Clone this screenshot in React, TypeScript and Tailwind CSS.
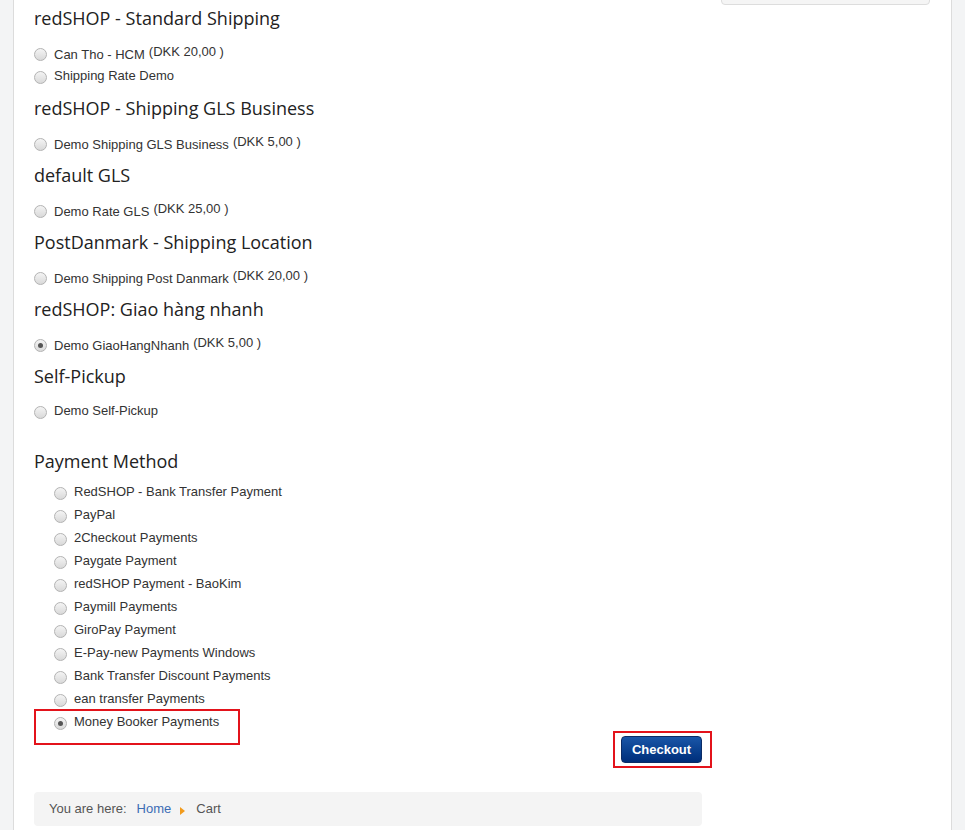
import React from "react";

function Radio({ checked = false }: { checked?: boolean }) {
  return (
    <span className="mt-[3px] flex h-[13px] w-[13px] shrink-0 items-center justify-center rounded-full border border-[#b3b3b3] bg-gradient-to-b from-[#f4f4f4] to-[#d9d9d9]">
      {checked && <span className="h-[5px] w-[5px] rounded-full bg-[#555]" />}
    </span>
  );
}

function ShipOption({ label, price, checked }: { label: string; price?: string; checked?: boolean }) {
  return (
    <div className="flex h-[23px] items-center">
      <Radio checked={checked} />
      <span className="ml-[7px] mt-[1px] text-[13px] text-[#333]">
        {label}
        {price && <span className="ml-[4px] align-[3px]">{price}</span>}
      </span>
    </div>
  );
}

const sections: { title: string; options: { label: string; price?: string; checked?: boolean }[] }[] = [
  {
    title: "redSHOP - Standard Shipping",
    options: [{ label: "Can Tho - HCM", price: "(DKK 20,00 )" }, { label: "Shipping Rate Demo" }],
  },
  { title: "redSHOP - Shipping GLS Business", options: [{ label: "Demo Shipping GLS Business", price: "(DKK 5,00 )" }] },
  { title: "default GLS", options: [{ label: "Demo Rate GLS", price: "(DKK 25,00 )" }] },
  { title: "PostDanmark - Shipping Location", options: [{ label: "Demo Shipping Post Danmark", price: "(DKK 20,00 )" }] },
  { title: "redSHOP: Giao hàng nhanh", options: [{ label: "Demo GiaoHangNhanh", price: "(DKK 5,00 )", checked: true }] },
  { title: "Self-Pickup", options: [{ label: "Demo Self-Pickup" }] },
];

const payments = [
  "RedSHOP - Bank Transfer Payment",
  "PayPal",
  "2Checkout Payments",
  "Paygate Payment",
  "redSHOP Payment - BaoKim",
  "Paymill Payments",
  "GiroPay Payment",
  "E-Pay-new Payments Windows",
  "Bank Transfer Discount Payments",
  "ean transfer Payments",
];

export default function App() {
  return (
    <div className="h-[830px] overflow-hidden bg-[#f3f4f5] font-['Liberation_Sans',Arial,sans-serif]">
      <div className="mx-[13px] flex h-full border-x border-[#dcdcdc] bg-white">
        <main className="ml-[20px] w-[668px] shrink-0 pt-[6px]">
          {sections.map((s, i) => (
            <section key={s.title} className={i === 0 ? "" : "mt-[9px]"}>
              <h3 className="h-[24px] font-['Open_Sans',sans-serif] text-[18px] leading-[24px] text-[#222]">{s.title}</h3>
              <div className="mt-[11px]">
                {s.options.map((o) => (
                  <ShipOption key={o.label} {...o} />
                ))}
              </div>
            </section>
          ))}

          <h3 className="mt-[27px] h-[24px] font-['Open_Sans',sans-serif] text-[18px] leading-[24px] text-[#222]">
            Payment Method
          </h3>
          <div className="mt-[7px] pl-[20px]">
            {payments.map((p) => (
              <div key={p} className="flex h-[23px] items-center">
                <Radio />
                <span className="ml-[7px] text-[13px] text-[#333]">{p}</span>
              </div>
            ))}
            <div className="relative flex h-[23px] items-center">
              <span className="absolute -left-[20px] -top-[1px] h-[36px] w-[206px] border-2 border-[#e3131b]" />
              <Radio checked />
              <span className="ml-[7px] text-[13px] text-[#333]">Money Booker Payments</span>
            </div>
          </div>

          <div className="mt-[3px] flex justify-end">
            <div className="relative">
              <span className="absolute -bottom-[5px] -left-[8px] -right-[10px] -top-[5px] border-2 border-[#e3131b]" />
              <button className="relative flex h-[27px] w-[81px] items-center justify-center rounded-[4px] border border-[#0b2c66] bg-gradient-to-b from-[#1a56a8] to-[#002e7a] text-[13px] font-bold text-white">
                Checkout
              </button>
            </div>
          </div>

          <nav className="mt-[29px] flex h-[34px] items-center rounded-[4px] bg-[#f4f4f4] pl-[15px] text-[13px]">
            <span className="text-[#555]">You are here:</span>
            <span className="ml-[10px] text-[#3c6cb4]">Home</span>
            <svg className="ml-[9px] mt-[3px]" width="5" height="8" viewBox="0 0 5 8">
              <path d="M0 0 L5 4 L0 8 Z" fill="#f29b1c" />
            </svg>
            <span className="ml-[11px] text-[#555]">Cart</span>
          </nav>
        </main>

        <aside className="ml-[19px] w-[209px] shrink-0">
          <div className="-mt-[4px] h-[9px] rounded-b-[4px] border border-[#dddddd] bg-[#f5f5f5]" />
        </aside>
      </div>
    </div>
  );
}
